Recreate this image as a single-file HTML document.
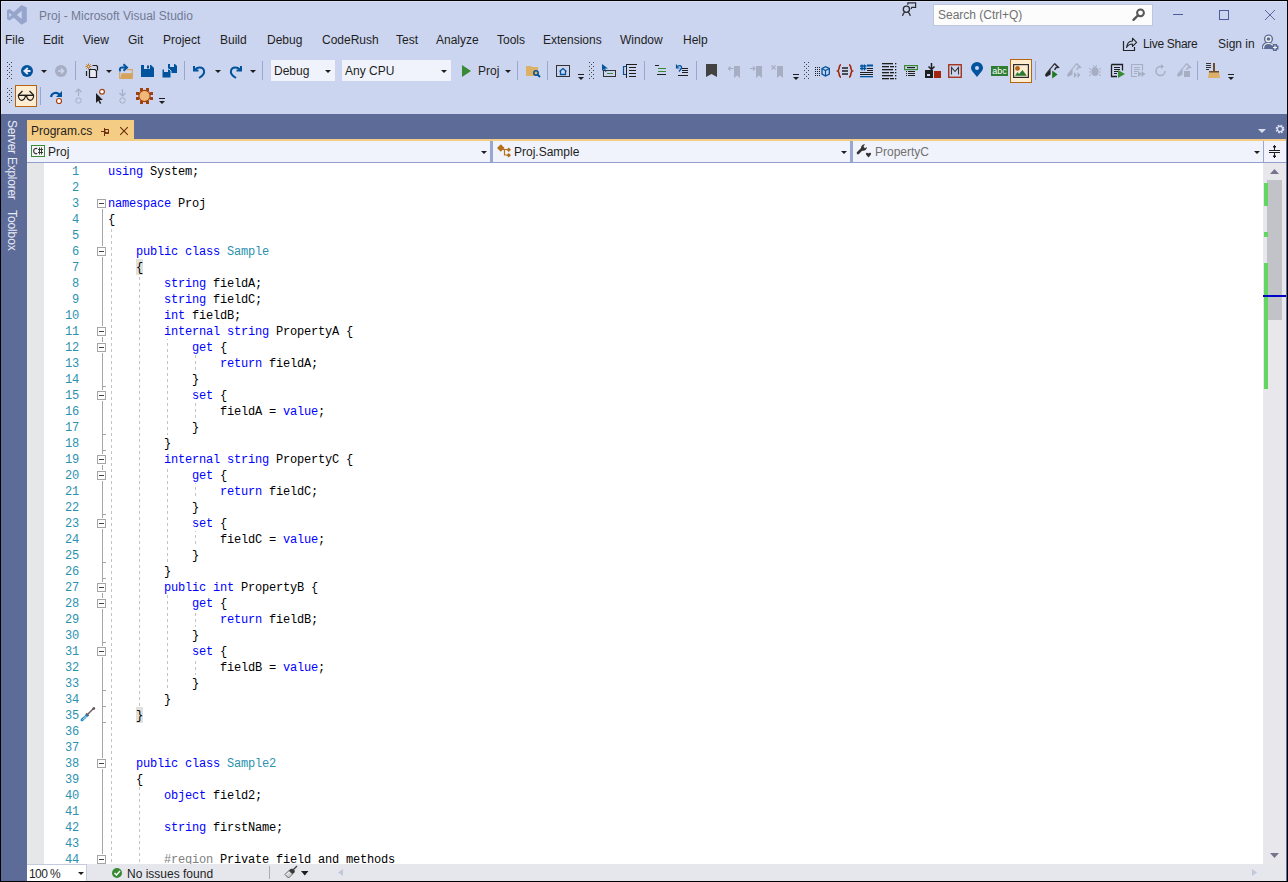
<!DOCTYPE html><html><head><meta charset="utf-8"><style>
*{margin:0;padding:0;box-sizing:border-box}
html,body{width:1288px;height:882px;overflow:hidden;background:#CCD5F0;font-family:"Liberation Sans",sans-serif;font-size:12px;color:#1E1E1E}
.a{position:absolute}
.t{position:absolute;white-space:pre;line-height:14px}
svg{position:absolute;overflow:visible}
.code{color:#000;font-family:"Liberation Mono",monospace;font-size:12px;letter-spacing:-0.2px;white-space:pre;position:absolute;line-height:16px;height:16px;padding-top:1px}
.ln{font-family:"Liberation Mono",monospace;font-size:12px;letter-spacing:-0.2px;padding-top:1px;position:absolute;line-height:16px;height:16px;color:#2B91AF;text-align:right;width:40px}
.k{color:#0000FF}.ty{color:#2B91AF}.g{color:#808080}
</style></head><body>
<div class="a" style="left:0px;top:0px;width:1288px;height:1px;background:#000;"></div>
<div class="a" style="left:0px;top:0px;width:1px;height:882px;background:#000;"></div>
<div class="a" style="left:1287px;top:0px;width:1px;height:882px;background:#000;"></div>
<div class="a" style="left:0px;top:881px;width:1288px;height:1px;background:#000;"></div>
<div class="a" style="left:1286px;top:114px;width:1px;height:767px;background:#5D6B99;"></div>
<div class="a" style="left:1px;top:1px;width:1286px;height:1px;background:#D8DFF4;"></div>
<div class="a" style="left:1px;top:1px;width:1px;height:113px;background:#D8DFF4;"></div>
<svg style="left:0px;top:0px" width="30" height="30" viewBox="0 0 30 30"><path d="M21.5 5L26.8 7.5V21.8L21.5 24.8L13.8 17.8L9.5 20.6L7 19.3V10.3L9.5 9.1L13.8 12Z M21.7 10.8L17 15L21.7 19.1Z M9.2 12.8V17.3L11.7 15Z" fill="#97A5CD" fill-rule="evenodd"/></svg>
<div class="t" style="left:39px;top:9px;color:#717A93;">Proj - Microsoft Visual Studio</div>
<svg style="left:900px;top:1px" width="18" height="17" viewBox="0 0 18 17"><path d="M7.8 3.8V1.8h7.8v4.6H11.8L11 8" fill="none" stroke="#2D2D30" stroke-width="1.2"/><circle cx="6.4" cy="8.3" r="3.1" fill="none" stroke="#2D2D30" stroke-width="1.3"/><path d="M2.5 14.8c0.4-1.8 1.2-3 2.2-3.6M10.3 14.8c-0.4-1.8-1.2-3-2.2-3.6" fill="none" stroke="#2D2D30" stroke-width="1.3"/></svg>
<div class="a" style="left:933px;top:4px;width:220px;height:22px;background:#FCFCFC;border:1px solid #BEC6DC"></div>
<div class="t" style="left:938px;top:8px;color:#717171;">Search (Ctrl+Q)</div>
<svg style="left:1132px;top:8px" width="13" height="13" viewBox="0 0 13 13"><circle cx="8.5" cy="4.8" r="3.4" fill="none" stroke="#555" stroke-width="2"/><path d="M5.8 7.5 L1.5 11.8" stroke="#555" stroke-width="2.4" stroke-linecap="round"/></svg>
<div class="a" style="left:1173px;top:14px;width:10px;height:1px;background:#4B5B9B;"></div>
<div class="a" style="left:1219px;top:10px;width:10px;height:10px;background:transparent;border:1px solid #4B5B9B"></div>
<svg style="left:1265px;top:10px" width="10" height="10" viewBox="0 0 10 10"><path d="M0 0L10 10M10 0L0 10" stroke="#5A6AA0" stroke-width="1"/></svg>
<div class="t" style="left:5px;top:33px;color:#1E1E1E;">File</div>
<div class="t" style="left:43px;top:33px;color:#1E1E1E;">Edit</div>
<div class="t" style="left:83px;top:33px;color:#1E1E1E;">View</div>
<div class="t" style="left:128px;top:33px;color:#1E1E1E;">Git</div>
<div class="t" style="left:163px;top:33px;color:#1E1E1E;">Project</div>
<div class="t" style="left:220px;top:33px;color:#1E1E1E;">Build</div>
<div class="t" style="left:267px;top:33px;color:#1E1E1E;">Debug</div>
<div class="t" style="left:322px;top:33px;color:#1E1E1E;">CodeRush</div>
<div class="t" style="left:396px;top:33px;color:#1E1E1E;">Test</div>
<div class="t" style="left:436px;top:33px;color:#1E1E1E;">Analyze</div>
<div class="t" style="left:497px;top:33px;color:#1E1E1E;">Tools</div>
<div class="t" style="left:543px;top:33px;color:#1E1E1E;">Extensions</div>
<div class="t" style="left:620px;top:33px;color:#1E1E1E;">Window</div>
<div class="t" style="left:683px;top:33px;color:#1E1E1E;">Help</div>
<svg style="left:1118px;top:32px" width="24" height="22" viewBox="0 0 24 22"><path d="M5.5 9v9.5h11v-3.5" fill="none" stroke="#252526" stroke-width="1.2"/><path d="M8.5 15.5C9 11.5 11 9 14.5 9V6.2L18.6 10.3 14.5 14.4V12C11.8 12 10 13 8.5 15.5z" fill="none" stroke="#252526" stroke-width="1.1" stroke-linejoin="round"/></svg>
<div class="t" style="left:1143px;top:37px;color:#1E1E1E;letter-spacing:-0.3px">Live Share</div>
<div class="t" style="left:1218px;top:37px;color:#1E1E1E;">Sign in</div>
<svg style="left:1262px;top:34px" width="17" height="17" viewBox="0 0 17 17"><circle cx="6.5" cy="5" r="4.6" fill="#5D6B99"/><path d="M0 15V13c0-3 2.5-5 6-5s6 2 6 5v2z" fill="#5D6B99"/><circle cx="6.5" cy="5" r="3.2" fill="#F2F2E6"/><circle cx="6.5" cy="5" r="1.8" fill="#5D6B99"/><path d="M1.5 14.5c0-3 2-5 5-5s5 2 5 4" fill="none" stroke="#F2F2E6" stroke-width="1.2"/><path d="M9.5 13.5h7M13 10v7" stroke="#5D6B99" stroke-width="4"/><path d="M11 13.5h4M13 11.5v4" stroke="#F2F2E6" stroke-width="1.2"/></svg>
<div class="a" style="left:7px;top:62px;width:1px;height:1px;background:#424242;"></div>
<div class="a" style="left:11px;top:62px;width:1px;height:1px;background:#424242;"></div>
<div class="a" style="left:9px;top:64px;width:1px;height:1px;background:#424242;"></div>
<div class="a" style="left:7px;top:66px;width:1px;height:1px;background:#424242;"></div>
<div class="a" style="left:11px;top:66px;width:1px;height:1px;background:#424242;"></div>
<div class="a" style="left:9px;top:68px;width:1px;height:1px;background:#424242;"></div>
<div class="a" style="left:7px;top:70px;width:1px;height:1px;background:#424242;"></div>
<div class="a" style="left:11px;top:70px;width:1px;height:1px;background:#424242;"></div>
<div class="a" style="left:9px;top:72px;width:1px;height:1px;background:#424242;"></div>
<div class="a" style="left:7px;top:74px;width:1px;height:1px;background:#424242;"></div>
<div class="a" style="left:11px;top:74px;width:1px;height:1px;background:#424242;"></div>
<div class="a" style="left:9px;top:76px;width:1px;height:1px;background:#424242;"></div>
<div class="a" style="left:7px;top:78px;width:1px;height:1px;background:#424242;"></div>
<div class="a" style="left:11px;top:78px;width:1px;height:1px;background:#424242;"></div>
<div class="a" style="left:7px;top:88px;width:1px;height:1px;background:#424242;"></div>
<div class="a" style="left:11px;top:88px;width:1px;height:1px;background:#424242;"></div>
<div class="a" style="left:9px;top:90px;width:1px;height:1px;background:#424242;"></div>
<div class="a" style="left:7px;top:92px;width:1px;height:1px;background:#424242;"></div>
<div class="a" style="left:11px;top:92px;width:1px;height:1px;background:#424242;"></div>
<div class="a" style="left:9px;top:94px;width:1px;height:1px;background:#424242;"></div>
<div class="a" style="left:7px;top:96px;width:1px;height:1px;background:#424242;"></div>
<div class="a" style="left:11px;top:96px;width:1px;height:1px;background:#424242;"></div>
<div class="a" style="left:9px;top:98px;width:1px;height:1px;background:#424242;"></div>
<div class="a" style="left:7px;top:100px;width:1px;height:1px;background:#424242;"></div>
<div class="a" style="left:11px;top:100px;width:1px;height:1px;background:#424242;"></div>
<div class="a" style="left:9px;top:102px;width:1px;height:1px;background:#424242;"></div>
<svg style="left:21px;top:65px" width="12" height="12" viewBox="0 0 12 12"><circle cx="6" cy="6" r="6" fill="#00539C"/><path d="M9.5 6H5M6.8 3L3.5 6 6.8 9" fill="none" stroke="#E6E6F5" stroke-width="2"/></svg>
<svg style="left:41px;top:70px" width="6" height="3" viewBox="0 0 6 3"><path d="M0 0h6l-3 3z" fill="#1E1E1E"/></svg>
<svg style="left:55px;top:65px" width="12" height="12" viewBox="0 0 12 12"><circle cx="6" cy="6" r="6" fill="#A7AEC3"/><path d="M3 6h5M6 3.5L8.5 6 6 8.5" fill="none" stroke="#CCD5F0" stroke-width="1.6"/></svg>
<div class="a" style="left:75px;top:61px;width:1px;height:19px;background:#9AA7D0;"></div>
<svg style="left:85px;top:63px" width="14" height="15" viewBox="0 0 14 15"><path d="M3.5 0.5v6M0.5 3.5h6M1.3 1.3l4.4 4.4M5.7 1.3L1.3 5.7" stroke="#C27D1A" stroke-width="1"/><circle cx="3.5" cy="3.5" r="1.3" fill="#CCD5F0" stroke="#C27D1A"/><path d="M7.5 2.5h4l1 1v4" fill="none" stroke="#1E1E1E" stroke-width="1.2"/><path d="M4.5 6.5h5.5l1.5 1.5v6.5h-7z" fill="#E8E8F0" stroke="#1E1E1E" stroke-width="1.2"/><path d="M1.5 8v5" stroke="#1E1E1E" stroke-width="1.2"/></svg>
<svg style="left:106px;top:70px" width="6" height="3" viewBox="0 0 6 3"><path d="M0 0h6l-3 3z" fill="#1E1E1E"/></svg>
<svg style="left:116px;top:60px" width="20" height="20" viewBox="0 0 20 20"><path d="M3.7 12V18.3H16.3V9.6H11" fill="none" stroke="#DBA55C" stroke-width="1.2"/><path d="M5.5 13.2H16.8L16 18.3H4.5z" fill="#D5A35C"/><path d="M4.6 11.3C3.2 10 3.5 7.5 6 7.5H10.5" fill="none" stroke="#00539C" stroke-width="1.9"/><path d="M7.5 4.3L11 7.5 7.5 10.7" fill="none" stroke="#00539C" stroke-width="1.9"/></svg>
<svg style="left:141px;top:65px" width="13" height="12" viewBox="0 0 13 12"><path d="M0 0h10l3 3v9H0z" fill="#00539C"/><rect x="3" y="0" width="6" height="4" fill="#CCD5F0"/><rect x="6" y="0.5" width="2" height="3" fill="#00539C"/></svg>
<svg style="left:162px;top:64px" width="15" height="14" viewBox="0 0 15 14"><path d="M6 0h7l2 2v7H6z" fill="#00539C"/><rect x="8" y="0" width="4" height="3" fill="#CCD5F0"/><path d="M0 5h7l2 2v7H0z" fill="#00539C" stroke="#CCD5F0" stroke-width="1"/><rect x="2" y="5" width="4" height="3" fill="#CCD5F0"/></svg>
<div class="a" style="left:184px;top:61px;width:1px;height:19px;background:#9AA7D0;"></div>
<svg style="left:193px;top:64px" width="13" height="14" viewBox="0 0 13 14"><path d="M1 2v4.5h4.5" fill="none" stroke="#00539C" stroke-width="2"/><path d="M2 6c2-3.5 8-3.5 9 0.5 0.7 3-1.5 5.5-5 7.5" fill="none" stroke="#00539C" stroke-width="2"/></svg>
<svg style="left:215px;top:70px" width="6" height="3" viewBox="0 0 6 3"><path d="M0 0h6l-3 3z" fill="#1E1E1E"/></svg>
<svg style="left:229px;top:64px" width="13" height="14" viewBox="0 0 13 14"><path d="M12 2v4.5H7.5" fill="none" stroke="#00539C" stroke-width="2"/><path d="M11 6c-2-3.5-8-3.5-9 0.5-0.7 3 1.5 5.5 5 7.5" fill="none" stroke="#00539C" stroke-width="2"/></svg>
<svg style="left:250px;top:70px" width="6" height="3" viewBox="0 0 6 3"><path d="M0 0h6l-3 3z" fill="#1E1E1E"/></svg>
<div class="a" style="left:262px;top:61px;width:1px;height:19px;background:#9AA7D0;"></div>
<div class="a" style="left:271px;top:60px;width:64px;height:21px;background:#F0F3FB;"></div>
<div class="t" style="left:274px;top:64px;color:#1E1E1E;">Debug</div>
<svg style="left:325px;top:70px" width="6" height="3" viewBox="0 0 6 3"><path d="M0 0h6l-3 3z" fill="#1E1E1E"/></svg>
<div class="a" style="left:342px;top:60px;width:109px;height:21px;background:#F0F3FB;"></div>
<div class="t" style="left:345px;top:64px;color:#1E1E1E;">Any CPU</div>
<svg style="left:441px;top:70px" width="6" height="3" viewBox="0 0 6 3"><path d="M0 0h6l-3 3z" fill="#1E1E1E"/></svg>
<svg style="left:462px;top:65px" width="9" height="12" viewBox="0 0 9 12"><path d="M0 0L9 6 0 12z" fill="#388A34"/></svg>
<div class="t" style="left:478px;top:64px;color:#1E1E1E;">Proj</div>
<svg style="left:505px;top:70px" width="6" height="3" viewBox="0 0 6 3"><path d="M0 0h6l-3 3z" fill="#1E1E1E"/></svg>
<div class="a" style="left:517px;top:61px;width:1px;height:19px;background:#9AA7D0;"></div>
<svg style="left:526px;top:65px" width="15" height="13" viewBox="0 0 15 13"><path d="M0 1h5l1 1h6v9H0z" fill="#DCB067"/><circle cx="10" cy="8" r="2.2" fill="none" stroke="#00539C" stroke-width="1.5"/><path d="M11.5 9.5l2.5 2.5" stroke="#00539C" stroke-width="1.8"/></svg>
<div class="a" style="left:547px;top:61px;width:1px;height:19px;background:#9AA7D0;"></div>
<svg style="left:556px;top:65px" width="14" height="12" viewBox="0 0 14 12"><rect x="0.5" y="0.5" width="13" height="11" fill="none" stroke="#333"/><path d="M3.5 6.5L7 3.5 10.5 6.5M4.5 6v3.5h5V6" fill="none" stroke="#00539C" stroke-width="1.3"/></svg>
<div class="a" style="left:578px;top:74px;width:6px;height:1px;background:#1E1E1E;"></div>
<svg style="left:578px;top:77px" width="6" height="3" viewBox="0 0 6 3"><path d="M0 0h6l-3 3z" fill="#1E1E1E"/></svg>
<div class="a" style="left:589px;top:62px;width:1px;height:1px;background:#424242;"></div>
<div class="a" style="left:593px;top:62px;width:1px;height:1px;background:#424242;"></div>
<div class="a" style="left:591px;top:64px;width:1px;height:1px;background:#424242;"></div>
<div class="a" style="left:589px;top:66px;width:1px;height:1px;background:#424242;"></div>
<div class="a" style="left:593px;top:66px;width:1px;height:1px;background:#424242;"></div>
<div class="a" style="left:591px;top:68px;width:1px;height:1px;background:#424242;"></div>
<div class="a" style="left:589px;top:70px;width:1px;height:1px;background:#424242;"></div>
<div class="a" style="left:593px;top:70px;width:1px;height:1px;background:#424242;"></div>
<div class="a" style="left:591px;top:72px;width:1px;height:1px;background:#424242;"></div>
<div class="a" style="left:589px;top:74px;width:1px;height:1px;background:#424242;"></div>
<div class="a" style="left:593px;top:74px;width:1px;height:1px;background:#424242;"></div>
<div class="a" style="left:591px;top:76px;width:1px;height:1px;background:#424242;"></div>
<div class="a" style="left:589px;top:78px;width:1px;height:1px;background:#424242;"></div>
<div class="a" style="left:593px;top:78px;width:1px;height:1px;background:#424242;"></div>
<svg style="left:602px;top:64px" width="14" height="14" viewBox="0 0 14 14"><path d="M0 0v7l2-2 1.5 3 1-0.5-1.5-3h3z" fill="#00539C"/><rect x="1.5" y="6.5" width="12" height="6" fill="none" stroke="#333"/><path d="M5 9.5h6" stroke="#388A34"/></svg>
<svg style="left:623px;top:64px" width="14" height="14" viewBox="0 0 14 14"><path d="M3 2.5H0.5v8H3" fill="none" stroke="#00539C" stroke-width="1.2"/><path d="M3.5 0v14" stroke="#1E1E1E"/><path d="M4 0.5h10M6 3.5h7M6 6.5h7M6 9.5h7M6 12.5h7" stroke="#1E1E1E"/></svg>
<div class="a" style="left:644px;top:61px;width:1px;height:19px;background:#9AA7D0;"></div>
<svg style="left:655px;top:65px" width="11" height="11" viewBox="0 0 11 11"><path d="M0 0.5h4M2 9.5h9" stroke="#1E1E1E"/><path d="M3 3.5h8M3 6.5h8" stroke="#388A34"/></svg>
<svg style="left:676px;top:64px" width="12" height="12" viewBox="0 0 12 12"><path d="M0.5 0.5v3.5h3" fill="none" stroke="#00539C" stroke-width="1.2"/><path d="M1 3.5c1-2.5 4.5-2.5 4.5 0 0 1.5-1.5 2.5-2.5 4" fill="none" stroke="#00539C" stroke-width="1.4"/><path d="M6 4.5h6M6 6.5h6M6 8.5h6M2 11.5h10" stroke="#1E1E1E"/></svg>
<div class="a" style="left:696px;top:61px;width:1px;height:19px;background:#9AA7D0;"></div>
<svg style="left:706px;top:64px" width="11" height="13" viewBox="0 0 11 13"><path d="M0 0h11v13L5.5 10 0 13z" fill="#424242"/></svg>
<svg style="left:728px;top:65px" width="13" height="13" viewBox="0 0 13 13"><path d="M6 1h6v12l-3-2.5L6 13z" fill="#A7AEC3"/><path d="M0.5 3.5h5M2.5 1.5l-2 2 2 2" fill="none" stroke="#A7AEC3" stroke-width="1.2"/></svg>
<svg style="left:750px;top:65px" width="13" height="13" viewBox="0 0 13 13"><path d="M6 1h6v12l-3-2.5L6 13z" fill="#A7AEC3"/><path d="M0 3.5h5M3 1.5l2 2-2 2" fill="none" stroke="#A7AEC3" stroke-width="1.2"/></svg>
<svg style="left:771px;top:65px" width="13" height="13" viewBox="0 0 13 13"><path d="M6 1h6v12l-3-2.5L6 13z" fill="#A7AEC3"/><path d="M0.5 0.5l4 4M4.5 0.5l-4 4" fill="none" stroke="#A7AEC3" stroke-width="1.2"/></svg>
<div class="a" style="left:793px;top:74px;width:6px;height:1px;background:#1E1E1E;"></div>
<svg style="left:793px;top:77px" width="6" height="3" viewBox="0 0 6 3"><path d="M0 0h6l-3 3z" fill="#1E1E1E"/></svg>
<div class="a" style="left:804px;top:62px;width:1px;height:1px;background:#424242;"></div>
<div class="a" style="left:808px;top:62px;width:1px;height:1px;background:#424242;"></div>
<div class="a" style="left:806px;top:64px;width:1px;height:1px;background:#424242;"></div>
<div class="a" style="left:804px;top:66px;width:1px;height:1px;background:#424242;"></div>
<div class="a" style="left:808px;top:66px;width:1px;height:1px;background:#424242;"></div>
<div class="a" style="left:806px;top:68px;width:1px;height:1px;background:#424242;"></div>
<div class="a" style="left:804px;top:70px;width:1px;height:1px;background:#424242;"></div>
<div class="a" style="left:808px;top:70px;width:1px;height:1px;background:#424242;"></div>
<div class="a" style="left:806px;top:72px;width:1px;height:1px;background:#424242;"></div>
<div class="a" style="left:804px;top:74px;width:1px;height:1px;background:#424242;"></div>
<div class="a" style="left:808px;top:74px;width:1px;height:1px;background:#424242;"></div>
<div class="a" style="left:806px;top:76px;width:1px;height:1px;background:#424242;"></div>
<div class="a" style="left:804px;top:78px;width:1px;height:1px;background:#424242;"></div>
<div class="a" style="left:808px;top:78px;width:1px;height:1px;background:#424242;"></div>
<svg style="left:815px;top:66px" width="15" height="11" viewBox="0 0 15 11"><g fill="#1E1E1E"><rect x="0" y="1" width="1" height="1"/><rect x="0" y="3" width="1" height="1"/><rect x="0" y="5" width="1" height="1"/><rect x="0" y="7" width="1" height="1"/><rect x="0" y="9" width="1" height="1"/><rect x="2" y="1" width="1" height="1"/><rect x="2" y="3" width="1" height="1"/><rect x="2" y="5" width="1" height="1"/><rect x="2" y="7" width="1" height="1"/><rect x="2" y="9" width="1" height="1"/><rect x="4" y="1" width="1" height="1"/><rect x="4" y="3" width="1" height="1"/><rect x="4" y="5" width="1" height="1"/><rect x="4" y="7" width="1" height="1"/><rect x="4" y="9" width="1" height="1"/></g><path d="M7 2.5L10.5 0.7 14.3 2.5v5.5L10.5 10 7 8z" fill="none" stroke="#00539C" stroke-width="1.3"/><path d="M7 2.5l3.5 2 3.8-2M10.5 4.5v5.5" fill="none" stroke="#00539C" stroke-width="1.2"/></svg>
<svg style="left:837px;top:64px" width="16" height="14" viewBox="0 0 16 14"><path d="M4 0.8C1.5 0.8 2.8 6 0.8 7c2 1 0.7 6.2 3.2 6.2M12 0.8c2.5 0 1.2 5.2 3.2 6.2-2 1-0.7 6.2-3.2 6.2" fill="none" stroke="#A1260D" stroke-width="1.6"/><path d="M5 4h6M5 7h6M5 10h6" stroke="#1E1E1E" stroke-width="1.6"/></svg>
<svg style="left:860px;top:64px" width="13" height="13" viewBox="0 0 13 13"><path d="M2 0.5v6M4.5 0.5v6M0 2h6.5M0 4.5h6.5" stroke="#00539C" stroke-width="1.3"/><rect x="7" y="0.5" width="6" height="2" fill="#00539C"/><rect x="7" y="4" width="6" height="1" fill="#1E1E1E"/><rect x="7" y="6" width="6" height="1" fill="#1E1E1E"/><rect x="0" y="8" width="13" height="1" fill="#1E1E1E"/><rect x="0" y="10" width="13" height="1" fill="#1E1E1E"/><rect x="0" y="12" width="13" height="1.3" fill="#00539C"/></svg>
<svg style="left:882px;top:63px" width="15" height="16" viewBox="0 0 15 16"><g fill="#1E1E1E"><rect x="0" y="0" width="11" height="1.3"/><rect x="13" y="0" width="1.3" height="1.3"/><rect x="0" y="3" width="7" height="1.3"/><rect x="8" y="3" width="4" height="1.3"/><rect x="13" y="3" width="1.3" height="1.3"/><rect x="0" y="6" width="11" height="1.3"/><rect x="13" y="6" width="1.3" height="1.3"/><rect x="0" y="9" width="7" height="1.3"/><rect x="8" y="9" width="4" height="1.3"/><rect x="13" y="9" width="1.3" height="1.3"/><rect x="0" y="12" width="11" height="1.3"/><rect x="13" y="12" width="1.3" height="1.3"/><rect x="0" y="15" width="7" height="1.3"/><rect x="8" y="15" width="4" height="1.3"/><rect x="13" y="15" width="1.3" height="1.3"/></g></svg>
<svg style="left:904px;top:65px" width="14" height="12" viewBox="0 0 14 12"><rect x="0.6" y="0.6" width="12.8" height="4" fill="none" stroke="#388A34" stroke-width="1.2"/><rect x="3" y="2" width="8" height="1.2" fill="#1E1E1E"/><g fill="#1E1E1E"><rect x="2" y="6" width="1" height="1"/><rect x="4" y="6" width="7" height="1"/><rect x="2" y="8" width="1" height="1"/><rect x="4" y="8" width="7" height="1"/><rect x="2" y="10" width="1" height="1"/><rect x="4" y="10" width="7" height="1"/></g></svg>
<svg style="left:925px;top:63px" width="16" height="15" viewBox="0 0 16 15"><path d="M6.5 0v6M3.5 3.5L6.5 6.5 9.5 3.5" fill="none" stroke="#1E1E1E" stroke-width="1.5"/><path d="M0 7h8v8H0z" fill="#1E1E1E"/><rect x="2" y="11" width="3" height="2" fill="#CCD5F0"/><rect x="9" y="8" width="7" height="7" fill="#A1260D"/></svg>
<svg style="left:948px;top:64px" width="14" height="14" viewBox="0 0 14 14"><rect x="0.75" y="0.75" width="12.5" height="12.5" fill="none" stroke="#A1260D" stroke-width="1.3"/><path d="M3.5 10.5v-7l3.5 4 3.5-4v7" fill="none" stroke="#333" stroke-width="1.1"/></svg>
<svg style="left:971px;top:63px" width="12" height="14" viewBox="0 0 12 14"><path d="M6 14C2 9 0 7 0 5a6 6 0 0 1 12 0c0 2-2 4-6 9z" fill="#00539C"/><circle cx="6" cy="5" r="2" fill="#CCD5F0"/></svg>
<svg style="left:991px;top:66px" width="17" height="10" viewBox="0 0 17 10"><rect width="17" height="10" fill="#2D7D32"/><text x="8.5" y="8" font-family="Liberation Sans" font-size="9" fill="#fff" text-anchor="middle">abc</text></svg>
<div class="a" style="left:1010px;top:59px;width:22px;height:24px;background:#FEEDD0;border:1px solid #B5650F"></div>
<svg style="left:1013px;top:64px" width="16" height="14" viewBox="0 0 16 14"><rect x="0.6" y="0.6" width="14.8" height="12.8" fill="none" stroke="#2D2D30" stroke-width="1.2"/><circle cx="4.5" cy="4.4" r="2.4" fill="#B5651A"/><path d="M2 11.7L4.5 8 6 10 9.5 6 13.8 11.7z" fill="#2A7A34"/></svg>
<div class="a" style="left:1035px;top:61px;width:1px;height:19px;background:#9AA7D0;"></div>
<svg style="left:1042px;top:60px" width="20" height="20" viewBox="0 0 20 20"><path d="M3 14.7L8.6 9.3V14.6L5.2 16.6C4 17 3 16 3 14.7z" fill="#252526"/><path d="M4 14L12.6 3.6" stroke="#252526" stroke-width="1.1"/><path d="M12.5 3.6L16.3 7.4 13.8 7.8 12.6 9.8" fill="none" stroke="#252526" stroke-width="1.4"/><path d="M10.2 10.4V18.6L15.6 14.5z" fill="#1F7A1F"/></svg>
<svg style="left:1064px;top:60px" width="20" height="20" viewBox="0 0 20 20"><path d="M3 14.7L8.6 9.3V14.6L5.2 16.6C4 17 3 16 3 14.7z" fill="#A7AEC3"/><path d="M4 14L12.6 3.6" stroke="#A7AEC3" stroke-width="1.1"/><path d="M12.5 3.6L16.3 7.4 13.8 7.8 12.6 9.8" fill="none" stroke="#A7AEC3" stroke-width="1.4"/><path d="M10 12v6l3-3zM13.5 12v6l3-3z" fill="#A7AEC3"/></svg>
<svg style="left:1089px;top:64px" width="12" height="13" viewBox="0 0 12 13"><ellipse cx="6" cy="7.5" rx="3.5" ry="4.5" fill="#A7AEC3"/><path d="M0 4l2.5 2M12 4L9.5 6M0 8h2.5M12 8H9.5M0 12l2.5-2M12 12L9.5 10M4 1l1.5 2M8 1L6.5 3" stroke="#A7AEC3"/></svg>
<svg style="left:1111px;top:64px" width="14" height="14" viewBox="0 0 14 14"><path d="M0.5 0.5h11v6M6 12.5H0.5v-12" fill="none" stroke="#1E1E1E" stroke-width="1.3"/><path d="M3 3.5h6M3 5.5h6M3 7.5h4M3 9.5h3" stroke="#1E1E1E"/><path d="M7 6v8l7-4z" fill="#388A34"/></svg>
<svg style="left:1131px;top:64px" width="15" height="14" viewBox="0 0 15 14"><path d="M0.5 0.5h11v6M6 12.5H0.5v-12" fill="none" stroke="#A7AEC3" stroke-width="1.2"/><path d="M3 3.5h6M3 5.5h6M3 7.5h4M3 9.5h3" stroke="#A7AEC3"/><path d="M7 7v6l4-3zM10.5 7v6l4-3z" fill="#A7AEC3"/></svg>
<svg style="left:1155px;top:64px" width="12" height="13" viewBox="0 0 12 13"><path d="M10 7a4.5 4.5 0 1 1-4.5-4.5H7" fill="none" stroke="#A7AEC3" stroke-width="1.5"/><path d="M6 0l3 2.5-3 2.5z" fill="#A7AEC3"/></svg>
<svg style="left:1174px;top:60px" width="20" height="20" viewBox="0 0 20 20"><path d="M3 14.7L8.6 9.3V14.6L5.2 16.6C4 17 3 16 3 14.7z" fill="#A7AEC3"/><path d="M4 14L12.6 3.6" stroke="#A7AEC3" stroke-width="1.1"/><path d="M12.5 3.6L16.3 7.4 13.8 7.8 12.6 9.8" fill="none" stroke="#A7AEC3" stroke-width="1.4"/><rect x="10" y="11" width="6" height="6" fill="#A7AEC3"/></svg>
<div class="a" style="left:1197px;top:61px;width:1px;height:19px;background:#9AA7D0;"></div>
<svg style="left:1206px;top:63px" width="14" height="15" viewBox="0 0 14 15"><path d="M0 0.5h5M0 2.5h5M0 4.5h5M0 6.5h3" stroke="#333"/><rect x="7" y="0" width="2" height="8" fill="#6D4C2E"/><path d="M3 9h10l1 6H2z" fill="#DCB067"/><rect x="3" y="8" width="10" height="1.5" fill="#6D4C2E"/></svg>
<div class="a" style="left:1228px;top:74px;width:6px;height:1px;background:#1E1E1E;"></div>
<svg style="left:1228px;top:77px" width="6" height="3" viewBox="0 0 6 3"><path d="M0 0h6l-3 3z" fill="#1E1E1E"/></svg>
<div class="a" style="left:15px;top:85px;width:22px;height:22px;background:#FEEDD0;border:1px solid #B5650F"></div>
<svg style="left:17px;top:90px" width="18" height="12" viewBox="0 0 18 12"><path d="M5.5 1L1.5 5M12.5 1l4 4" stroke="#1E1E1E" stroke-width="1.3"/><path d="M1 5.3h16" stroke="#1E1E1E" stroke-width="1.4"/><path d="M1.2 5.5c0.5 3 1.5 4.8 3.5 4.8s3.3-1.5 3.8-4.6M16.8 5.5c-0.5 3-1.5 4.8-3.5 4.8s-3.3-1.5-3.8-4.6" fill="none" stroke="#1E1E1E" stroke-width="1.2"/></svg>
<div class="a" style="left:40px;top:87px;width:1px;height:18px;background:#9AA7D0;"></div>
<svg style="left:49px;top:90px" width="14" height="15" viewBox="0 0 14 15"><path d="M2 7c0.5-4 6-6 9-2" fill="none" stroke="#00539C" stroke-width="2.2"/><path d="M13 1v6H7z" fill="#00539C"/><circle cx="10" cy="11" r="2.5" fill="#fff" stroke="#A8400F" stroke-width="1.2"/></svg>
<svg style="left:75px;top:89px" width="7" height="15" viewBox="0 0 7 15"><path d="M3.5 0v7M0.5 3L3.5 0 6.5 3" fill="none" stroke="#A7AEC3" stroke-width="1.2"/><circle cx="3.5" cy="11.5" r="2.7" fill="none" stroke="#A7AEC3"/></svg>
<svg style="left:95px;top:88px" width="11" height="16" viewBox="0 0 11 16"><path d="M1 5v10l2.3-2.3 1.7 3.3 1.3-0.7-1.7-3.3h3.3z" fill="#1E1E1E"/><circle cx="7" cy="3.8" r="2.4" fill="#fff" stroke="#A8400F" stroke-width="1.2"/></svg>
<svg style="left:119px;top:89px" width="7" height="15" viewBox="0 0 7 15"><path d="M3.5 0v7M0.5 4L3.5 7 6.5 4" fill="none" stroke="#A7AEC3" stroke-width="1.2"/><circle cx="3.5" cy="11.5" r="2.7" fill="none" stroke="#A7AEC3"/></svg>
<svg style="left:136px;top:88px" width="17" height="16" viewBox="0 0 17 16"><g fill="#A1400D"><rect x="4" y="0" width="3" height="3"/><rect x="10" y="0" width="3" height="3"/><rect x="14" y="4" width="3" height="3"/><rect x="14" y="9" width="3" height="3"/><rect x="10" y="13" width="3" height="3"/><rect x="4" y="13" width="3" height="3"/><rect x="0" y="9" width="3" height="3"/><rect x="0" y="4" width="3" height="3"/></g><circle cx="8.5" cy="8" r="6.2" fill="#A1400D"/><circle cx="8.5" cy="8" r="5" fill="#F2B878"/></svg>
<div class="a" style="left:159px;top:98px;width:6px;height:1px;background:#1E1E1E;"></div>
<svg style="left:159px;top:101px" width="6" height="3" viewBox="0 0 6 3"><path d="M0 0h6l-3 3z" fill="#1E1E1E"/></svg>
<div class="a" style="left:0px;top:114px;width:1286px;height:767px;background:#5D6B99;"></div>
<div class="a" style="left:0px;top:114px;width:1px;height:767px;background:#000;"></div>
<div class="a" style="left:5px;top:120px;writing-mode:vertical-rl;white-space:pre;line-height:14px;color:#E6EAF5;letter-spacing:-0.25px">Server Explorer</div>
<div class="a" style="left:5px;top:210px;writing-mode:vertical-rl;white-space:pre;line-height:14px;color:#E6EAF5;letter-spacing:-0.1px">Toolbox</div>
<div class="a" style="left:27px;top:120px;width:107px;height:19px;background:#F5CC84;"></div>
<div class="t" style="left:31px;top:124px;color:#1E1E1E;">Program.cs</div>
<svg style="left:100px;top:127px" width="10" height="9" viewBox="0 0 10 9"><path d="M1 4.5h3.5M4.5 1v8" stroke="#6B2D0E" stroke-width="1"/><path d="M5 2.5h3.5v3.5H5z" fill="none" stroke="#6B2D0E" stroke-width="1"/><rect x="5" y="5.2" width="4" height="1.6" fill="#6B2D0E"/></svg>
<svg style="left:119px;top:126px" width="10" height="10" viewBox="0 0 10 10"><path d="M1.2 1.2l7.6 7.6M8.8 1.2l-7.6 7.6" stroke="#6B2D0E" stroke-width="1.1"/></svg>
<svg style="left:1258px;top:129px" width="8" height="4" viewBox="0 0 8 4"><path d="M0 0h8L4 4z" fill="#D8DEF0"/></svg>
<svg style="left:1275px;top:124px" width="10" height="10" viewBox="0 0 10 10"><circle cx="5" cy="5" r="3.3" fill="none" stroke="#D8DEF0" stroke-width="2.2" stroke-dasharray="1.6 1"/><circle cx="5" cy="5" r="2.6" fill="none" stroke="#D8DEF0" stroke-width="1.3"/></svg>
<div class="a" style="left:27px;top:139px;width:1259px;height:2px;background:#F5CC84;"></div>
<div class="a" style="left:27px;top:141px;width:1259px;height:21px;background:#F0F3FB;"></div>
<div class="a" style="left:27px;top:162px;width:1259px;height:1px;background:#919FCA;"></div>
<svg style="left:31px;top:145px" width="14" height="12" viewBox="0 0 14 12"><rect x="0.5" y="0.5" width="13" height="11" fill="#F6F6F6" stroke="#388A34"/><path d="M6.2 3.6A2.6 2.6 0 1 0 6.2 8.4" fill="none" stroke="#3A3A3A" stroke-width="1.2"/><path d="M8.5 2.5v7M10.5 2.5v7M7 4.5h5M7 7.5h5" stroke="#3A3A3A" stroke-width="1"/></svg>
<div class="t" style="left:48px;top:145px;color:#1E1E1E;">Proj</div>
<svg style="left:481px;top:151px" width="6" height="3" viewBox="0 0 6 3"><path d="M0 0h6l-3 3z" fill="#1E1E1E"/></svg>
<div class="a" style="left:490px;top:141px;width:3px;height:21px;background:#9AA7CF;"></div>
<svg style="left:494px;top:141px" width="20" height="20" viewBox="0 0 20 20"><g fill="#B5701A"><path d="M6.8 3.3L10.6 7 6.8 10.8 3 7z"/><path d="M14.7 6.5L17 8.8 14.7 11.1 12.4 8.8z"/><path d="M14.7 12L17 14.3 14.7 16.6 12.4 14.3z"/></g><path d="M9 8.5h4M10.5 8.5v5.5h3" fill="none" stroke="#B5701A" stroke-width="1.2"/></svg>
<div class="t" style="left:514px;top:145px;color:#1E1E1E;">Proj.Sample</div>
<svg style="left:841px;top:151px" width="6" height="3" viewBox="0 0 6 3"><path d="M0 0h6l-3 3z" fill="#1E1E1E"/></svg>
<div class="a" style="left:850px;top:141px;width:3px;height:21px;background:#9AA7CF;"></div>
<svg style="left:854px;top:141px" width="20" height="20" viewBox="0 0 20 20"><path d="M4 12L8.5 7.5" stroke="#333" stroke-width="2.6" stroke-linecap="round"/><path d="M7.2 7.8A3.6 3.6 0 0 1 10.3 3.2L11 3.2 9.5 5.5 10.8 7.2 13 6 12.9 5.7A3.6 3.6 0 0 1 8 9.5z" fill="#333"/><path d="M12.3 12c0.7-0.7 1.7-0.3 2.2 0.4 0.5-0.7 1.5-1.1 2.2-0.4 0.6 0.7 0.3 1.6-0.3 2.3L14.5 16.4 12.6 14.3c-0.6-0.7-0.9-1.6-0.3-2.3z" fill="#333"/></svg>
<div class="t" style="left:875px;top:145px;color:#717171;">PropertyC</div>
<svg style="left:1254px;top:151px" width="6" height="3" viewBox="0 0 6 3"><path d="M0 0h6l-3 3z" fill="#1E1E1E"/></svg>
<div class="a" style="left:1263px;top:141px;width:1px;height:21px;background:#9AA7CF;"></div>
<svg style="left:1268px;top:144px" width="13" height="15" viewBox="0 0 13 15"><g fill="#1E1E1E"><rect x="1" y="6" width="11" height="1"/><rect x="1" y="8" width="11" height="1"/><rect x="6" y="2" width="1" height="4"/><rect x="6" y="9" width="1" height="4"/><rect x="5" y="2" width="3" height="1.5"/><rect x="5" y="11.5" width="3" height="1.5"/><rect x="6" y="1" width="1" height="1"/><rect x="6" y="13" width="1" height="1"/></g></svg>
<div class="a" style="left:27px;top:163px;width:1236px;height:701px;background:#FFFFFF;"></div>
<div class="a" style="left:27px;top:163px;width:17px;height:701px;background:#E6E7E8;"></div>
<div class="a" style="left:1263px;top:163px;width:23px;height:701px;background:#E8E8EC;"></div>
<svg style="left:1270px;top:169px" width="9" height="5" viewBox="0 0 9 5"><path d="M0 5L4.5 0 9 5z" fill="#77738F"/></svg>
<svg style="left:1270px;top:853px" width="9" height="5" viewBox="0 0 9 5"><path d="M0 0L4.5 5 9 0z" fill="#77738F"/></svg>
<div class="a" style="left:1267px;top:180px;width:15px;height:140px;background:#C2C3C9;"></div>
<div class="a" style="left:1264px;top:183px;width:4px;height:23px;background:#63D563;"></div>
<div class="a" style="left:1264px;top:232px;width:4px;height:5px;background:#63D563;"></div>
<div class="a" style="left:1264px;top:263px;width:4px;height:126px;background:#63D563;"></div>
<div class="a" style="left:1263px;top:295px;width:23px;height:2px;background:#0000C8;"></div>
<div class="a" style="left:136px;top:259px;width:7px;height:16px;background:#E0E1DB;"></div>
<div class="a" style="left:136px;top:707px;width:7px;height:16px;background:#E0E1DB;"></div>
<div class="a" style="left:111px;top:227px;width:1px;height:637px;background-image:linear-gradient(to bottom,#C4C4C4 0,#C4C4C4 3px,transparent 3px,transparent 6px);background-size:1px 6px;background-position:0 2px"></div>
<div class="a" style="left:139px;top:275px;width:1px;height:432px;background-image:linear-gradient(to bottom,#C4C4C4 0,#C4C4C4 3px,transparent 3px,transparent 6px);background-size:1px 6px;background-position:0 2px"></div>
<div class="a" style="left:167px;top:339px;width:1px;height:96px;background-image:linear-gradient(to bottom,#C4C4C4 0,#C4C4C4 3px,transparent 3px,transparent 6px);background-size:1px 6px;background-position:0 4px"></div>
<div class="a" style="left:195px;top:355px;width:1px;height:16px;background-image:linear-gradient(to bottom,#C4C4C4 0,#C4C4C4 3px,transparent 3px,transparent 6px);background-size:1px 6px;background-position:0 0px"></div>
<div class="a" style="left:195px;top:403px;width:1px;height:16px;background-image:linear-gradient(to bottom,#C4C4C4 0,#C4C4C4 3px,transparent 3px,transparent 6px);background-size:1px 6px;background-position:0 0px"></div>
<div class="a" style="left:167px;top:467px;width:1px;height:96px;background-image:linear-gradient(to bottom,#C4C4C4 0,#C4C4C4 3px,transparent 3px,transparent 6px);background-size:1px 6px;background-position:0 2px"></div>
<div class="a" style="left:195px;top:483px;width:1px;height:16px;background-image:linear-gradient(to bottom,#C4C4C4 0,#C4C4C4 3px,transparent 3px,transparent 6px);background-size:1px 6px;background-position:0 4px"></div>
<div class="a" style="left:195px;top:531px;width:1px;height:16px;background-image:linear-gradient(to bottom,#C4C4C4 0,#C4C4C4 3px,transparent 3px,transparent 6px);background-size:1px 6px;background-position:0 4px"></div>
<div class="a" style="left:167px;top:595px;width:1px;height:96px;background-image:linear-gradient(to bottom,#C4C4C4 0,#C4C4C4 3px,transparent 3px,transparent 6px);background-size:1px 6px;background-position:0 0px"></div>
<div class="a" style="left:195px;top:611px;width:1px;height:16px;background-image:linear-gradient(to bottom,#C4C4C4 0,#C4C4C4 3px,transparent 3px,transparent 6px);background-size:1px 6px;background-position:0 2px"></div>
<div class="a" style="left:195px;top:659px;width:1px;height:16px;background-image:linear-gradient(to bottom,#C4C4C4 0,#C4C4C4 3px,transparent 3px,transparent 6px);background-size:1px 6px;background-position:0 2px"></div>
<div class="a" style="left:139px;top:787px;width:1px;height:77px;background-image:linear-gradient(to bottom,#C4C4C4 0,#C4C4C4 3px,transparent 3px,transparent 6px);background-size:1px 6px;background-position:0 0px"></div>
<div class="a" style="left:102px;top:208px;width:1px;height:656px;background:#A5A5A5;"></div>
<div class="a" style="left:102px;top:386px;width:4px;height:1px;background:#A5A5A5;"></div>
<div class="a" style="left:102px;top:434px;width:4px;height:1px;background:#A5A5A5;"></div>
<div class="a" style="left:102px;top:450px;width:4px;height:1px;background:#A5A5A5;"></div>
<div class="a" style="left:102px;top:514px;width:4px;height:1px;background:#A5A5A5;"></div>
<div class="a" style="left:102px;top:562px;width:4px;height:1px;background:#A5A5A5;"></div>
<div class="a" style="left:102px;top:578px;width:4px;height:1px;background:#A5A5A5;"></div>
<div class="a" style="left:102px;top:642px;width:4px;height:1px;background:#A5A5A5;"></div>
<div class="a" style="left:102px;top:690px;width:4px;height:1px;background:#A5A5A5;"></div>
<div class="a" style="left:102px;top:706px;width:4px;height:1px;background:#A5A5A5;"></div>
<div class="a" style="left:102px;top:722px;width:4px;height:1px;background:#A5A5A5;"></div>
<div class="a" style="left:102px;top:198px;width:1px;height:11px;background:#FFFFFF;"></div>
<div class="a" style="left:97px;top:199px;width:9px;height:9px;background:#FFFFFF;border:1px solid #A5A5A5"></div>
<div class="a" style="left:99px;top:203px;width:5px;height:1px;background:#424242;"></div>
<div class="a" style="left:102px;top:246px;width:1px;height:11px;background:#FFFFFF;"></div>
<div class="a" style="left:97px;top:247px;width:9px;height:9px;background:#FFFFFF;border:1px solid #A5A5A5"></div>
<div class="a" style="left:99px;top:251px;width:5px;height:1px;background:#424242;"></div>
<div class="a" style="left:102px;top:326px;width:1px;height:11px;background:#FFFFFF;"></div>
<div class="a" style="left:97px;top:327px;width:9px;height:9px;background:#FFFFFF;border:1px solid #A5A5A5"></div>
<div class="a" style="left:99px;top:331px;width:5px;height:1px;background:#424242;"></div>
<div class="a" style="left:102px;top:342px;width:1px;height:11px;background:#FFFFFF;"></div>
<div class="a" style="left:97px;top:343px;width:9px;height:9px;background:#FFFFFF;border:1px solid #A5A5A5"></div>
<div class="a" style="left:99px;top:347px;width:5px;height:1px;background:#424242;"></div>
<div class="a" style="left:102px;top:390px;width:1px;height:11px;background:#FFFFFF;"></div>
<div class="a" style="left:97px;top:391px;width:9px;height:9px;background:#FFFFFF;border:1px solid #A5A5A5"></div>
<div class="a" style="left:99px;top:395px;width:5px;height:1px;background:#424242;"></div>
<div class="a" style="left:102px;top:454px;width:1px;height:11px;background:#FFFFFF;"></div>
<div class="a" style="left:97px;top:455px;width:9px;height:9px;background:#FFFFFF;border:1px solid #A5A5A5"></div>
<div class="a" style="left:99px;top:459px;width:5px;height:1px;background:#424242;"></div>
<div class="a" style="left:102px;top:470px;width:1px;height:11px;background:#FFFFFF;"></div>
<div class="a" style="left:97px;top:471px;width:9px;height:9px;background:#FFFFFF;border:1px solid #A5A5A5"></div>
<div class="a" style="left:99px;top:475px;width:5px;height:1px;background:#424242;"></div>
<div class="a" style="left:102px;top:518px;width:1px;height:11px;background:#FFFFFF;"></div>
<div class="a" style="left:97px;top:519px;width:9px;height:9px;background:#FFFFFF;border:1px solid #A5A5A5"></div>
<div class="a" style="left:99px;top:523px;width:5px;height:1px;background:#424242;"></div>
<div class="a" style="left:102px;top:582px;width:1px;height:11px;background:#FFFFFF;"></div>
<div class="a" style="left:97px;top:583px;width:9px;height:9px;background:#FFFFFF;border:1px solid #A5A5A5"></div>
<div class="a" style="left:99px;top:587px;width:5px;height:1px;background:#424242;"></div>
<div class="a" style="left:102px;top:598px;width:1px;height:11px;background:#FFFFFF;"></div>
<div class="a" style="left:97px;top:599px;width:9px;height:9px;background:#FFFFFF;border:1px solid #A5A5A5"></div>
<div class="a" style="left:99px;top:603px;width:5px;height:1px;background:#424242;"></div>
<div class="a" style="left:102px;top:646px;width:1px;height:11px;background:#FFFFFF;"></div>
<div class="a" style="left:97px;top:647px;width:9px;height:9px;background:#FFFFFF;border:1px solid #A5A5A5"></div>
<div class="a" style="left:99px;top:651px;width:5px;height:1px;background:#424242;"></div>
<div class="a" style="left:102px;top:758px;width:1px;height:11px;background:#FFFFFF;"></div>
<div class="a" style="left:97px;top:759px;width:9px;height:9px;background:#FFFFFF;border:1px solid #A5A5A5"></div>
<div class="a" style="left:99px;top:763px;width:5px;height:1px;background:#424242;"></div>
<div class="a" style="left:102px;top:854px;width:1px;height:11px;background:#FFFFFF;"></div>
<div class="a" style="left:97px;top:855px;width:9px;height:9px;background:#FFFFFF;border:1px solid #A5A5A5"></div>
<div class="a" style="left:99px;top:859px;width:5px;height:1px;background:#424242;"></div>
<div class="ln" style="left:39px;top:163px">1</div>
<div class="code" style="left:108px;top:163px"><span class="k">using</span> System;</div>
<div class="ln" style="left:39px;top:179px">2</div>
<div class="ln" style="left:39px;top:195px">3</div>
<div class="code" style="left:108px;top:195px"><span class="k">namespace</span> Proj</div>
<div class="ln" style="left:39px;top:211px">4</div>
<div class="code" style="left:108px;top:211px">{</div>
<div class="ln" style="left:39px;top:227px">5</div>
<div class="ln" style="left:39px;top:243px">6</div>
<div class="code" style="left:136px;top:243px"><span class="k">public</span> <span class="k">class</span> <span class="ty">Sample</span></div>
<div class="ln" style="left:39px;top:259px">7</div>
<div class="code" style="left:136px;top:259px">{</div>
<div class="ln" style="left:39px;top:275px">8</div>
<div class="code" style="left:164px;top:275px"><span class="k">string</span> fieldA;</div>
<div class="ln" style="left:39px;top:291px">9</div>
<div class="code" style="left:164px;top:291px"><span class="k">string</span> fieldC;</div>
<div class="ln" style="left:39px;top:307px">10</div>
<div class="code" style="left:164px;top:307px"><span class="k">int</span> fieldB;</div>
<div class="ln" style="left:39px;top:323px">11</div>
<div class="code" style="left:164px;top:323px"><span class="k">internal</span> <span class="k">string</span> PropertyA {</div>
<div class="ln" style="left:39px;top:339px">12</div>
<div class="code" style="left:192px;top:339px"><span class="k">get</span> {</div>
<div class="ln" style="left:39px;top:355px">13</div>
<div class="code" style="left:220px;top:355px"><span class="k">return</span> fieldA;</div>
<div class="ln" style="left:39px;top:371px">14</div>
<div class="code" style="left:192px;top:371px">}</div>
<div class="ln" style="left:39px;top:387px">15</div>
<div class="code" style="left:192px;top:387px"><span class="k">set</span> {</div>
<div class="ln" style="left:39px;top:403px">16</div>
<div class="code" style="left:220px;top:403px">fieldA = <span class="k">value</span>;</div>
<div class="ln" style="left:39px;top:419px">17</div>
<div class="code" style="left:192px;top:419px">}</div>
<div class="ln" style="left:39px;top:435px">18</div>
<div class="code" style="left:164px;top:435px">}</div>
<div class="ln" style="left:39px;top:451px">19</div>
<div class="code" style="left:164px;top:451px"><span class="k">internal</span> <span class="k">string</span> PropertyC {</div>
<div class="ln" style="left:39px;top:467px">20</div>
<div class="code" style="left:192px;top:467px"><span class="k">get</span> {</div>
<div class="ln" style="left:39px;top:483px">21</div>
<div class="code" style="left:220px;top:483px"><span class="k">return</span> fieldC;</div>
<div class="ln" style="left:39px;top:499px">22</div>
<div class="code" style="left:192px;top:499px">}</div>
<div class="ln" style="left:39px;top:515px">23</div>
<div class="code" style="left:192px;top:515px"><span class="k">set</span> {</div>
<div class="ln" style="left:39px;top:531px">24</div>
<div class="code" style="left:220px;top:531px">fieldC = <span class="k">value</span>;</div>
<div class="ln" style="left:39px;top:547px">25</div>
<div class="code" style="left:192px;top:547px">}</div>
<div class="ln" style="left:39px;top:563px">26</div>
<div class="code" style="left:164px;top:563px">}</div>
<div class="ln" style="left:39px;top:579px">27</div>
<div class="code" style="left:164px;top:579px"><span class="k">public</span> <span class="k">int</span> PropertyB {</div>
<div class="ln" style="left:39px;top:595px">28</div>
<div class="code" style="left:192px;top:595px"><span class="k">get</span> {</div>
<div class="ln" style="left:39px;top:611px">29</div>
<div class="code" style="left:220px;top:611px"><span class="k">return</span> fieldB;</div>
<div class="ln" style="left:39px;top:627px">30</div>
<div class="code" style="left:192px;top:627px">}</div>
<div class="ln" style="left:39px;top:643px">31</div>
<div class="code" style="left:192px;top:643px"><span class="k">set</span> {</div>
<div class="ln" style="left:39px;top:659px">32</div>
<div class="code" style="left:220px;top:659px">fieldB = <span class="k">value</span>;</div>
<div class="ln" style="left:39px;top:675px">33</div>
<div class="code" style="left:192px;top:675px">}</div>
<div class="ln" style="left:39px;top:691px">34</div>
<div class="code" style="left:164px;top:691px">}</div>
<div class="ln" style="left:39px;top:707px">35</div>
<div class="code" style="left:136px;top:707px">}</div>
<div class="ln" style="left:39px;top:723px">36</div>
<div class="ln" style="left:39px;top:739px">37</div>
<div class="ln" style="left:39px;top:755px">38</div>
<div class="code" style="left:136px;top:755px"><span class="k">public</span> <span class="k">class</span> <span class="ty">Sample2</span></div>
<div class="ln" style="left:39px;top:771px">39</div>
<div class="code" style="left:136px;top:771px">{</div>
<div class="ln" style="left:39px;top:787px">40</div>
<div class="code" style="left:164px;top:787px"><span class="k">object</span> field2;</div>
<div class="ln" style="left:39px;top:803px">41</div>
<div class="ln" style="left:39px;top:819px">42</div>
<div class="code" style="left:164px;top:819px"><span class="k">string</span> firstName;</div>
<div class="ln" style="left:39px;top:835px">43</div>
<div class="ln" style="left:39px;top:851px">44</div>
<div class="code" style="left:164px;top:851px"><span class="g">#region</span> Private field and methods</div>
<svg style="left:78px;top:704px" width="20" height="20" viewBox="0 0 20 20"><path d="M9.5 10.5L16.5 3.5" stroke="#6A5A5C" stroke-width="1.5"/><circle cx="15.8" cy="4.6" r="1.4" fill="#6A5A5C"/><path d="M8 9.5L10.5 12" stroke="#6A5A5C" stroke-width="2"/><path d="M8.3 10.2L10 11.9 5.5 16.6C4.6 17.5 3.6 17.6 3 17 2.4 16.4 2.5 15.4 3.4 14.6z" fill="#1B86C4"/><path d="M5 13.5l2.8 2.8M6.6 12l2.8 2.8M4.2 16.2l4-4" stroke="#DDEBF6" stroke-width="0.7"/></svg>
<div class="a" style="left:27px;top:864px;width:1259px;height:17px;background:#E6E7ED;"></div>
<div class="a" style="left:27px;top:864px;width:60px;height:17px;background:#FFFFFF;border-top:1px solid #C3CBDD;border-right:1px solid #C3CBDD"></div>
<div class="t" style="left:29px;top:867px;color:#1E1E1E;letter-spacing:-0.6px">100 %</div>
<svg style="left:78px;top:872px" width="6" height="3" viewBox="0 0 6 3"><path d="M0 0h6l-3 3z" fill="#1E1E1E"/></svg>
<svg style="left:112px;top:868px" width="10" height="10" viewBox="0 0 10 10"><circle cx="5" cy="5" r="5" fill="#388A34"/><path d="M2.5 5l2 2 3.5-4" fill="none" stroke="#fff" stroke-width="1.5"/></svg>
<div class="t" style="left:127px;top:867px;color:#1E1E1E;">No issues found</div>
<div class="a" style="left:269px;top:866px;width:1px;height:13px;background:#A9ACB8;"></div>
<svg style="left:284px;top:866px" width="14" height="13" viewBox="0 0 14 13"><path d="M1 8.5L5 4.5 8.5 8 4.5 12z" fill="#F4F4F6" stroke="#555" stroke-width="1"/><path d="M2.5 10l3.5-3.5M3.5 11l3.5-3.5" stroke="#888" stroke-width="0.6"/><path d="M5 4.5C6 2.5 8.5 2 10 3.5 11.5 5 11 7 8.5 8z" fill="#3A3A3A"/><path d="M9.5 3.5L13 0" stroke="#3A3A3A" stroke-width="1.2"/></svg>
<svg style="left:301px;top:871px" width="8" height="5" viewBox="0 0 8 5"><path d="M0 0h7.5L3.75 4.5z" fill="#1E1E1E"/></svg>
<svg style="left:338px;top:869px" width="5" height="7" viewBox="0 0 5 7"><path d="M5 0L0 3.5 5 7z" fill="#C2C8DC"/></svg>
<svg style="left:1252px;top:869px" width="5" height="7" viewBox="0 0 5 7"><path d="M0 0L5 3.5 0 7z" fill="#C2C8DC"/></svg>
</body></html>
